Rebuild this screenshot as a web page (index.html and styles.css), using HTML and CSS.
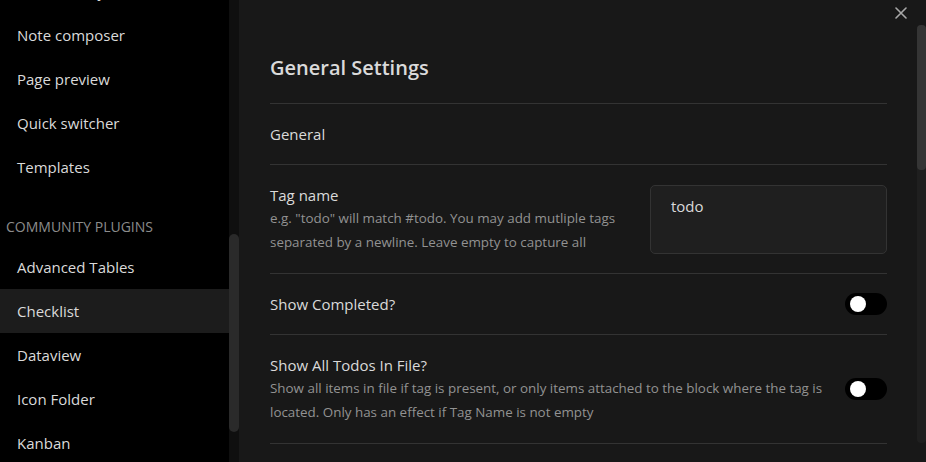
FILE: index.html
```html
<!DOCTYPE html>
<html>
<head>
<meta charset="utf-8">
<link rel="stylesheet" href="styles.css">
</head>
<body>
<div class="app">
  <aside class="sidebar">
    <div class="nav">
      <div class="nav-item">File recovery</div>
      <div class="nav-item">Note composer</div>
      <div class="nav-item">Page preview</div>
      <div class="nav-item">Quick switcher</div>
      <div class="nav-item">Templates</div>
      <div class="nav-group">Community plugins</div>
      <div class="nav-item">Advanced Tables</div>
      <div class="nav-item active">Checklist</div>
      <div class="nav-item">Dataview</div>
      <div class="nav-item">Icon Folder</div>
      <div class="nav-item">Kanban</div>
    </div>
    <div class="side-scroll"><div class="side-thumb"></div></div>
  </aside>
  <main class="content">
    <button class="close" aria-label="Close">
      <svg width="12" height="12" viewBox="0 0 12 12"><path d="M1 1L11 11M11 1L1 11" stroke="#a8a8a8" stroke-width="1.6" stroke-linecap="round"/></svg>
    </button>
    <div class="main-scroll"><div class="main-thumb"></div></div>
    <div class="settings">
      <h2 class="title">General Settings</h2>
      <div class="setting">
        <div class="info"><div class="name">General</div></div>
      </div>
      <div class="setting">
        <div class="info">
          <div class="name">Tag name</div>
          <div class="desc">e.g. "todo" will match #todo. You may add mutliple tags<br>separated by a newline. Leave empty to capture all</div>
        </div>
        <div class="control"><div class="textarea">todo</div></div>
      </div>
      <div class="setting">
        <div class="info"><div class="name">Show Completed?</div></div>
        <div class="control"><div class="toggle"><div class="knob"></div></div></div>
      </div>
      <div class="setting">
        <div class="info">
          <div class="name">Show All Todos In File?</div>
          <div class="desc">Show all items in file if tag is present, or only items attached to the block where the tag is<br>located. Only has an effect if Tag Name is not empty</div>
        </div>
        <div class="control"><div class="toggle"><div class="knob"></div></div></div>
      </div>
      <div class="setting end"></div>
    </div>
  </main>
</div>
</body>
</html>
```

FILE: styles.css
```css
* { box-sizing: border-box; }
html, body {
  margin: 0;
  padding: 0;
  width: 926px;
  height: 462px;
  overflow: hidden;
  background: #181818;
  font-family: "Open Sans", "Noto Sans", sans-serif;
  color: #dadada;
}
.app {
  display: flex;
  height: 462px;
}
.sidebar {
  width: 239px;
  flex: none;
  display: flex;
  background: #000;
  overflow: hidden;
}
.nav {
  width: 229px;
  flex: none;
  margin-top: -31px;
}
.nav-item {
  height: 44px;
  display: flex;
  align-items: center;
  padding-left: 17px;
  font-size: 15px;
  color: #dadada;
}
.nav-item.active {
  background: #1c1c1c;
}
.nav-group {
  height: 56px;
  padding: 28px 0 0 6px;
  font-size: 14px;
  line-height: 20px;
  text-transform: uppercase;
  color: #8c8c8c;
}
.side-scroll {
  width: 10px;
  flex: none;
  background: #0f0f0f;
  padding-top: 234px;
}
.side-thumb {
  width: 10px;
  height: 198px;
  border-radius: 5px;
  background: #2a2a2a;
}
.content {
  flex: 1;
  position: relative;
  padding: 0 39px 0 31px;
}
.close {
  position: absolute;
  top: 7px;
  left: 656px;
  width: 12px;
  height: 12px;
  padding: 0;
  border: 0;
  background: none;
  display: block;
}
.close svg { display: block; }
.main-scroll {
  position: absolute;
  top: 25px;
  right: 0;
  width: 9px;
  height: 418px;
  border-radius: 4px;
  background: #1f1f1f;
}
.main-thumb {
  height: 145px;
  border-radius: 4px;
  background: #353535;
}
.settings {
  padding-top: 56px;
}
.title {
  margin: 0 0 23px;
  font-size: 20px;
  line-height: 24px;
  font-weight: 600;
  color: #dadada;
}
.setting {
  display: flex;
  align-items: center;
  border-top: 1px solid #333;
  padding: 19px 0;
}
.setting.end { padding: 0; }
.info {
  flex: 1 1 auto;
  margin-right: 16px;
}
.name {
  font-size: 15px;
  line-height: 22px;
  color: #dadada;
}
.desc {
  font-size: 13.4px;
  line-height: 24px;
  color: #929292;
}
.control {
  flex: none;
  display: flex;
  justify-content: flex-end;
}
.textarea {
  width: 237px;
  height: 69px;
  padding: 9px 20px;
  border: 1px solid #333;
  border-radius: 5px;
  background: #1f1f1f;
  font-size: 15px;
  line-height: 22px;
  color: #dadada;
}
.toggle {
  position: relative;
  width: 42px;
  height: 22px;
  border-radius: 11px;
  background: #000;
}
.knob {
  position: absolute;
  top: 3px;
  left: 5px;
  width: 16px;
  height: 16px;
  border-radius: 50%;
  background: #fff;
}
```
